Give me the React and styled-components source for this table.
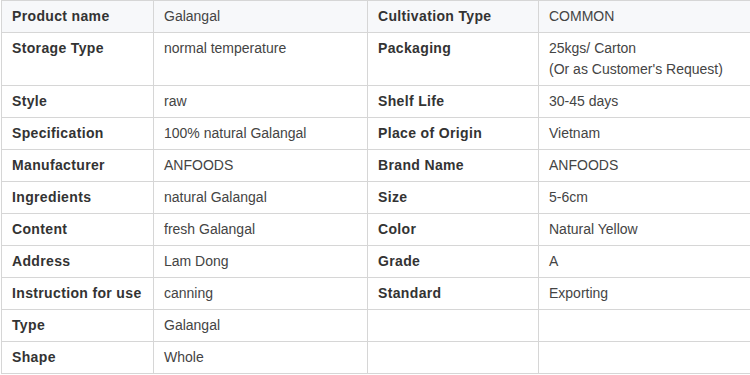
import React from 'react';
import styled, { createGlobalStyle } from 'styled-components';

const rows = [
    ['Product name', 'Galangal', 'Cultivation Type', 'COMMON'],
    ['Storage Type', 'normal temperature', 'Packaging', ['25kgs/ Carton', "(Or as Customer's Request)"]],
    ['Style', 'raw', 'Shelf Life', '30-45 days'],
    ['Specification', '100% natural Galangal', 'Place of Origin', 'Vietnam'],
    ['Manufacturer', 'ANFOODS', 'Brand Name', 'ANFOODS'],
    ['Ingredients', 'natural Galangal', 'Size', '5-6cm'],
    ['Content', 'fresh Galangal', 'Color', 'Natural Yellow'],
    ['Address', 'Lam Dong', 'Grade', 'A'],
    ['Instruction for use', 'canning', 'Standard', 'Exporting'],
    ['Type', 'Galangal', '', ''],
    ['Shape', 'Whole', '', ''],
];

const renderValue = (value) => {
    if (Array.isArray(value)) {
        return value.map((line) => <div key={line}>{line}</div>);
    }
    return value;
};

const App = () => {
    return (
        <>
            <GlobalStyle />
            <SpecTable>
                <colgroup>
                    <col style={{ width: 152 }} />
                    <col style={{ width: 214 }} />
                    <col style={{ width: 171 }} />
                    <col />
                </colgroup>
                <tbody>
                    {rows.map((row, i) => (
                        <Row key={row[0]} $head={i === 0}>
                            <Label>{row[0]}</Label>
                            <Value>{renderValue(row[1])}</Value>
                            <Label>{row[2]}</Label>
                            <Value>{renderValue(row[3])}</Value>
                        </Row>
                    ))}
                </tbody>
            </SpecTable>
        </>
    );
};

export default App;

// STYLED COMPONENTS BELOW:

const GlobalStyle = createGlobalStyle`
    body {
        margin: 0;
        background: #fff;
        font-family: "Liberation Sans", Arial, sans-serif;
    }
`;

const SpecTable = styled.table`
    width: 750px;
    margin-left: 1px;
    border-collapse: collapse;
    table-layout: fixed;
    font-size: 14px;
    line-height: 21px;
`;

const Row = styled.tr`
    background: ${(p) => (p.$head ? '#f7f8fa' : '#fff')};
`;

const Cell = styled.td`
    border: 1px solid #d6d6d6;
    padding: 5px 10px;
    vertical-align: top;
    text-align: left;
`;

const Label = styled(Cell)`
    font-weight: bold;
    color: #333;
    letter-spacing: 0.35px;
`;

const Value = styled(Cell)`
    color: #444;
`;
